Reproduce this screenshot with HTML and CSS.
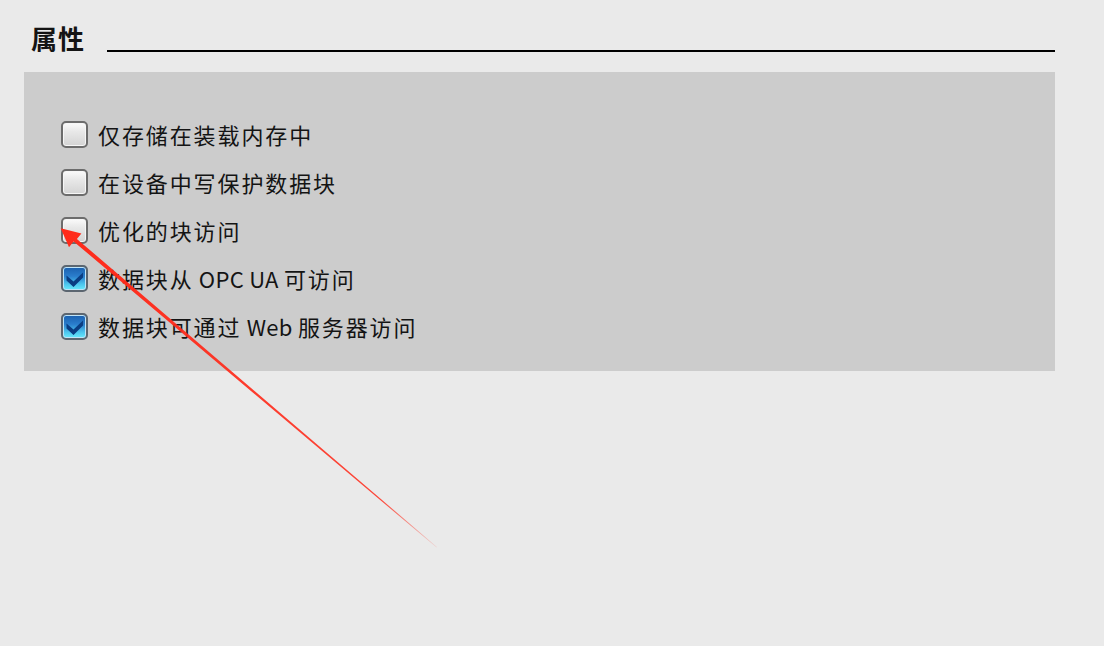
FILE: index.html
```html
<!DOCTYPE html>
<html lang="zh">
<head>
<meta charset="utf-8">
<title>属性</title>
<link rel="stylesheet" href="styles.css">
</head>
<body>
<div class="page">
  <div class="header">
    <h1 class="title">属性</h1>
    <div class="rule"></div>
  </div>
  <div class="panel">
    <label class="row"><span class="box"></span><span class="label">仅存储在装载内存中</span></label>
    <label class="row"><span class="box"></span><span class="label">在设备中写保护数据块</span></label>
    <label class="row"><span class="box"></span><span class="label">优化的块访问</span></label>
    <label class="row"><span class="box checked"><svg viewBox="0 0 23 23" class="tick"><path d="M3.5 8.5 L10.5 14.5 L20 5.5 L20 10.5 L10.5 20 L3.5 13.5 Z" fill="#0a3d82"/></svg></span><span class="label">数据块从<span class="latin"> OPC UA </span>可访问</span></label>
    <label class="row"><span class="box checked"><svg viewBox="0 0 23 23" class="tick"><path d="M3.5 8.5 L10.5 14.5 L20 5.5 L20 10.5 L10.5 20 L3.5 13.5 Z" fill="#0a3d82"/></svg></span><span class="label">数据块可通过<span class="latin"> Web </span>服务器访问</span></label>
  </div>
</div>
<svg class="arrow" width="1104" height="646" viewBox="0 0 1104 646">
  <defs>
    <linearGradient id="fade" x1="437" y1="547" x2="61" y2="228" gradientUnits="userSpaceOnUse">
      <stop offset="0" stop-color="#ff2a1a" stop-opacity="0.1"/>
      <stop offset="0.15" stop-color="#ff2a1a" stop-opacity="0.85"/>
      <stop offset="1" stop-color="#ff2a1a"/>
    </linearGradient>
  </defs>
  <polygon fill="url(#fade)" points="437,547 76.9,238.9 81.4,233.4 60.7,228.3 69.0,247.2 73.6,241.5 436.5,547.5"/>
</svg>
</body>
</html>
```

FILE: styles.css
```css
html, body {
  margin: 0;
  padding: 0;
}
body {
  background: #eaeaea;
  width: 1104px;
  height: 646px;
  overflow: hidden;
  position: relative;
  font-family: "Noto Sans CJK SC", "Noto Sans", sans-serif;
  color: #141414;
}
.page {
  margin-left: 24px;
  width: 1031px;
  padding-top: 22px;
}
.header {
  display: flex;
  align-items: flex-start;
  height: 50px;
  padding-left: 7px;
}
.title {
  margin: 0;
  font-size: 26px;
  font-weight: 700;
  line-height: 32px;
  letter-spacing: 1px;
}
.rule {
  flex: 1;
  margin-left: 22px;
  margin-top: 28px;
  height: 2px;
  background: #000;
}
.panel {
  background: #cccccc;
  height: 299px;
  box-sizing: border-box;
  padding: 38px 0 21px 37px;
  display: flex;
  flex-direction: column;
}
.row {
  height: 48px;
  display: flex;
  align-items: center;
  gap: 10px;
}
.box {
  width: 27px;
  height: 27px;
  box-sizing: border-box;
  border: 2px solid #6c6c6c;
  border-radius: 5px;
  background: linear-gradient(#fbfbfb 0%, #e9e9e9 35%, #d3d3d3 100%);
  box-shadow: inset 0 0 0 1px #f6f6f6;
  display: flex;
  align-items: center;
  justify-content: center;
}
.box.checked {
  border-color: #5c6670;
  background: linear-gradient(#1a5fae 0%, #2a7dcc 40%, #4cc6ee 75%, #68ecfd 100%);
  box-shadow: inset 0 0 0 1px #bfe4f8;
}
.tick {
  width: 23px;
  height: 23px;
}
.label {
  font-size: 22px;
  letter-spacing: 1.9px;
  line-height: 30px;
}
.latin {
  letter-spacing: 0.3px;
}
.arrow {
  position: absolute;
  left: 0;
  top: 0;
  pointer-events: none;
}
```
